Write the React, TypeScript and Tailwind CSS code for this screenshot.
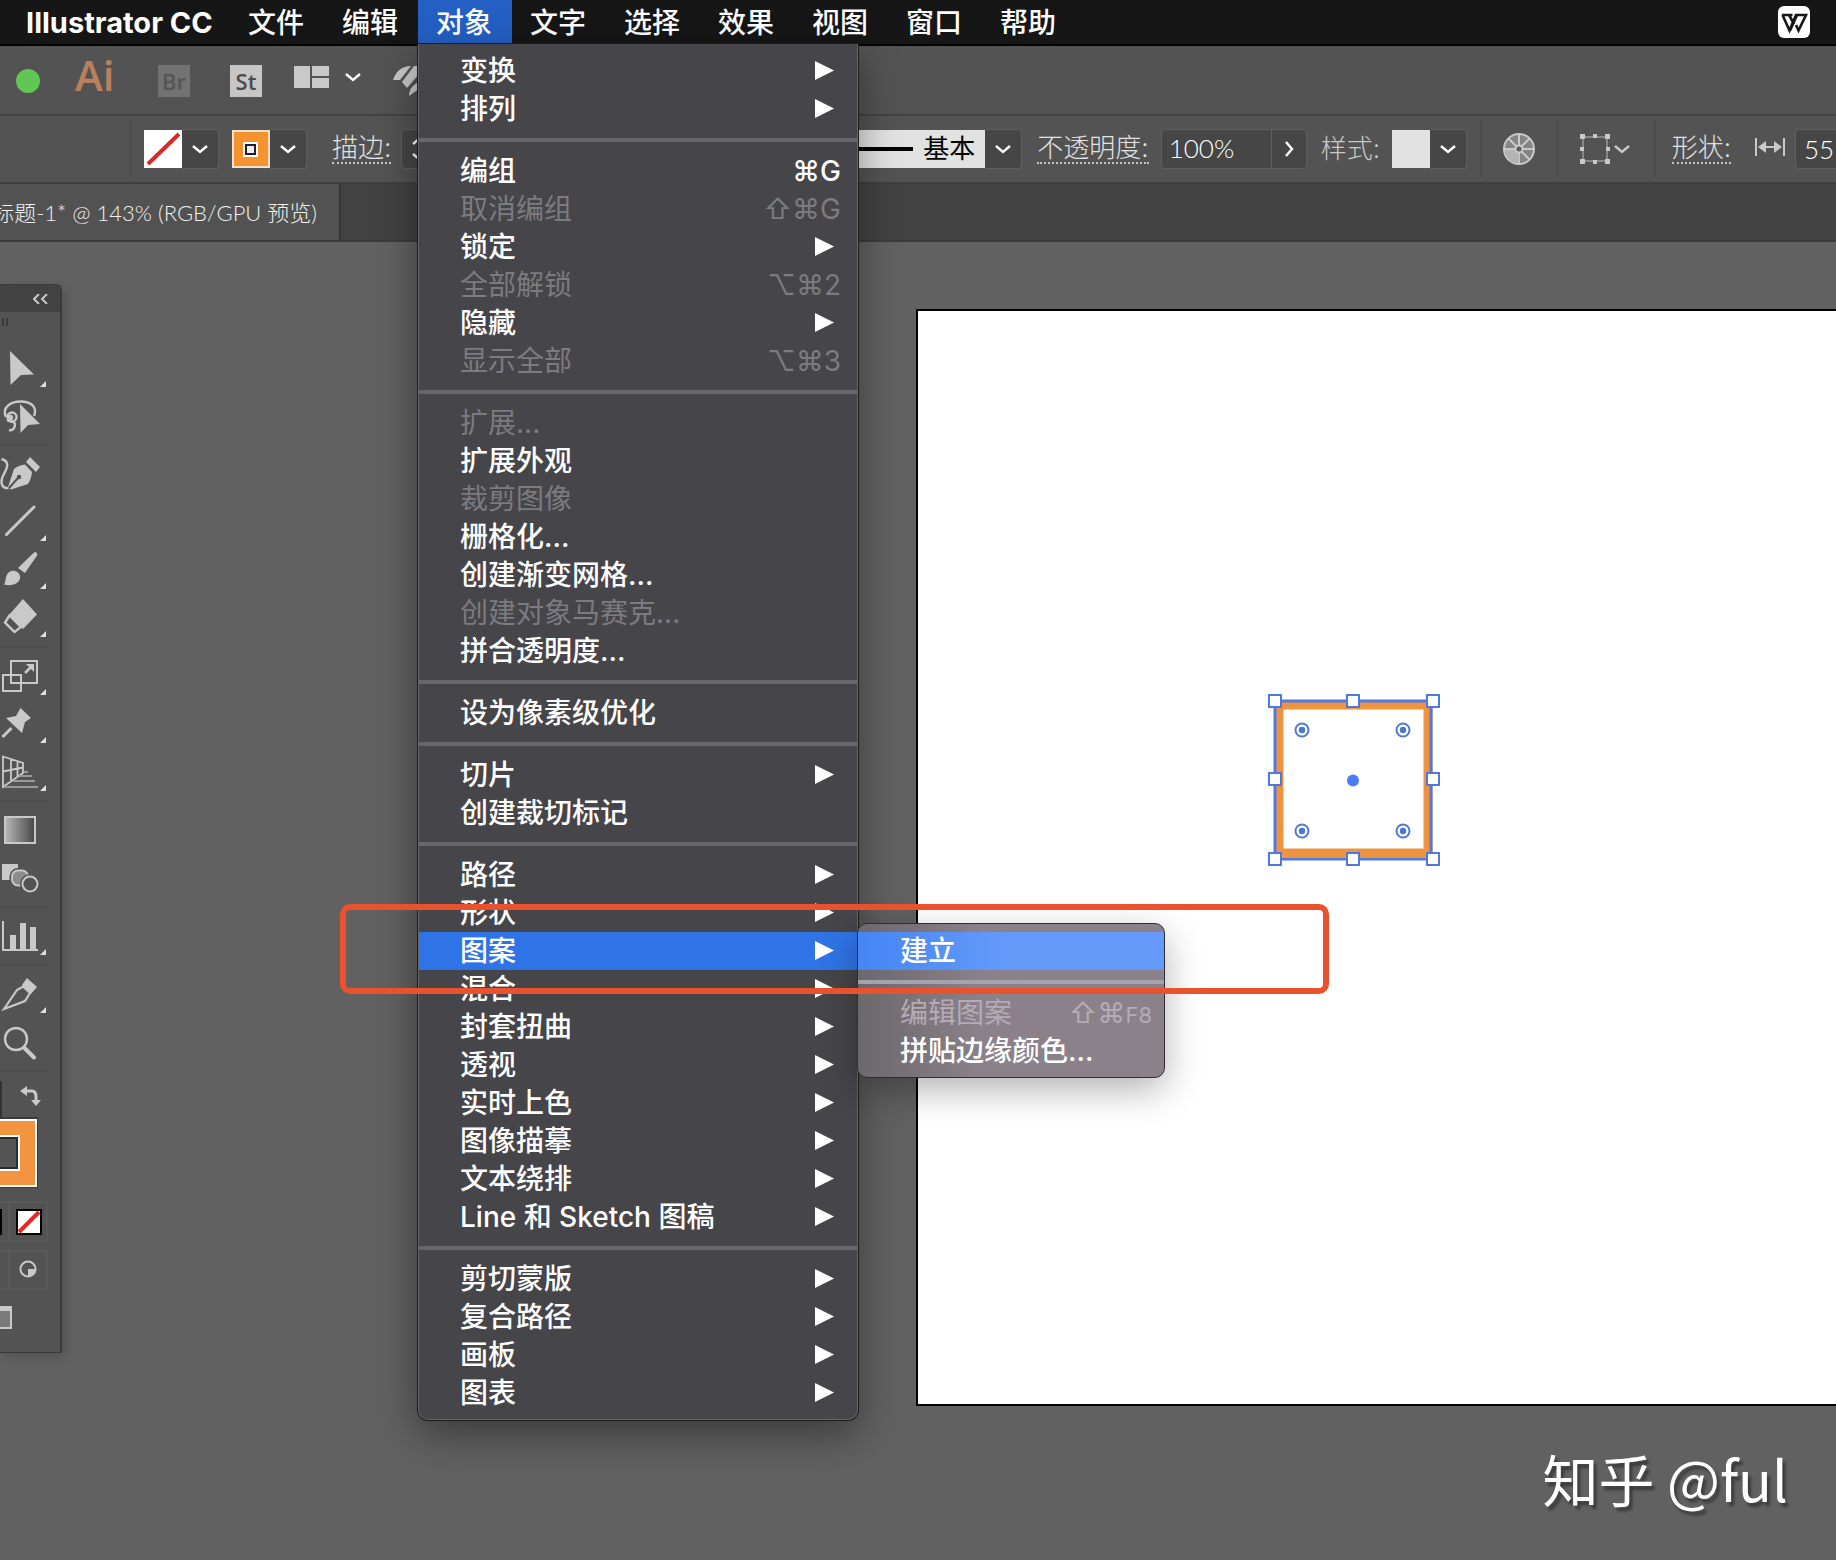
import { Fragment, type ReactNode } from 'react'
import clsx from 'clsx'

type Entry = {
  label: string
  keys?: string
  sub?: boolean
  disabled?: boolean
}

const MENUS = ['文件', '编辑', '对象', '文字', '选择', '效果', '视图', '窗口', '帮助']

const OBJECT_MENU: Entry[][] = [
  [
    { label: '变换', sub: true },
    { label: '排列', sub: true },
  ],
  [
    { label: '编组', keys: '⌘G' },
    { label: '取消编组', keys: '⇧⌘G', disabled: true },
    { label: '锁定', sub: true },
    { label: '全部解锁', keys: '⌥⌘2', disabled: true },
    { label: '隐藏', sub: true },
    { label: '显示全部', keys: '⌥⌘3', disabled: true },
  ],
  [
    { label: '扩展...', disabled: true },
    { label: '扩展外观' },
    { label: '裁剪图像', disabled: true },
    { label: '栅格化...' },
    { label: '创建渐变网格...' },
    { label: '创建对象马赛克...', disabled: true },
    { label: '拼合透明度...' },
  ],
  [{ label: '设为像素级优化' }],
  [{ label: '切片', sub: true }, { label: '创建裁切标记' }],
  [
    { label: '路径', sub: true },
    { label: '形状', sub: true },
    { label: '图案', sub: true },
    { label: '混合', sub: true },
    { label: '封套扭曲', sub: true },
    { label: '透视', sub: true },
    { label: '实时上色', sub: true },
    { label: '图像描摹', sub: true },
    { label: '文本绕排', sub: true },
    { label: 'Line 和 Sketch 图稿', sub: true },
  ],
  [
    { label: '剪切蒙版', sub: true },
    { label: '复合路径', sub: true },
    { label: '画板', sub: true },
    { label: '图表', sub: true },
  ],
]

const ICON = '#c9c9c9'

function PatternSubmenu() {
  return (
    <div className="absolute -top-[9px] left-full z-10 w-[308px] rounded-[10px] border border-[#2f2f2f] bg-linear-to-r from-[#6c686c] to-[#8a818a] to-40% pt-2 pb-[7px] shadow-[0_12px_36px_rgba(0,0,0,0.3)]">
      <button
        type="button"
        className="flex h-[38px] w-full items-center bg-linear-to-r from-[#4486f4] to-[#659afa] to-50% pl-[42px] text-white"
      >
        建立
      </button>
      <hr className="my-2.5 h-1 border-0 bg-[#a3a3ab]" />
      <button
        type="button"
        disabled
        className="flex h-[38px] w-full items-center justify-between pr-3 pl-[42px] font-normal text-[#b5abb6]"
      >
        编辑图案
        <span className="flex items-baseline">
          ⇧⌘<span className="text-[22px]">F8</span>
        </span>
      </button>
      <button type="button" className="flex h-[38px] w-full items-center pl-[42px] text-white">
        拼贴边缘颜色...
      </button>
    </div>
  )
}

function MenuRow({ entry }: { entry: Entry }) {
  const active = entry.label === '图案'
  return (
    <div className="relative">
      <button
        type="button"
        disabled={entry.disabled}
        className={clsx(
          'flex h-[38px] w-full items-center justify-between pl-[41px]',
          active && 'bg-[#2f74e6]',
          entry.disabled ? 'font-normal text-[#7c7b80]' : 'text-white',
          entry.sub ? 'pr-[23px]' : 'pr-4',
        )}
      >
        {entry.label}
        {entry.keys && <span>{entry.keys}</span>}
        {entry.sub && (
          <svg width="19" height="20" viewBox="0 0 19 20" fill="#fff">
            <path d="M0 0 19 9.500 0 19z" />
          </svg>
        )}
      </button>
      {active && <PatternSubmenu />}
    </div>
  )
}

function ObjectMenu() {
  return (
    <div className="absolute top-full left-0 z-20 w-[440px] rounded-b-[10px] border border-t-0 border-[#67676b] bg-[#464549] pt-2 pb-[7px] shadow-[0_0_0_1px_#1c1c1c,0_14px_40px_rgba(0,0,0,0.4)]">
      {OBJECT_MENU.map((group, i) => (
        <Fragment key={i}>
          {i > 0 && <hr className="my-2.5 h-1 border-0 bg-[#68676c]" />}
          {group.map((entry) => (
            <MenuRow key={entry.label} entry={entry} />
          ))}
        </Fragment>
      ))}
    </div>
  )
}

function MenuBar() {
  return (
    <header className="flex h-[46px] border-b-2 border-black bg-[#161616] text-[28px] leading-none font-medium text-white">
      <button type="button" className="w-[230px] shrink-0 pl-[26px] text-left text-[29px] font-bold whitespace-nowrap">
        Illustrator CC
      </button>
      {MENUS.map((name) => (
        <div key={name} className="relative h-11 w-[94px] shrink-0">
          <button type="button" className={clsx('h-11 w-full pt-0.5 pr-0.5', name === '对象' && 'bg-[#245fc4]')}>
            {name}
          </button>
          {name === '对象' && <ObjectMenu />}
        </div>
      ))}
      <button type="button" aria-label="WPS" className="mr-[26px] ml-auto">
        <svg width="32" height="32" viewBox="0 0 32 32">
          <rect width="32" height="32" rx="6" fill="#fff" />
          <path
            d="M4 9h10.500l-3.500 0 5 9M4.500 9l7 15.500L18 9h10l-7.500 15.500-2.500-5.500"
            fill="none"
            stroke="#161616"
            strokeWidth="2.600"
          />
          <path d="M12 24.500 19 9" stroke="#161616" strokeWidth="2.600" />
        </svg>
      </button>
    </header>
  )
}

function Chevron({ right, color = '#fff' }: { right?: boolean; color?: string }) {
  return (
    <svg width="16" height="16" viewBox="0 0 16 16" fill="none" stroke={color} strokeWidth="2.400">
      <path d={right ? 'M5 1l6 7-6 7' : 'M1 5l7 6 7-6'} />
    </svg>
  )
}

function AppBar() {
  return (
    <div className="flex h-[70px] items-center border-b-2 border-[#424242] bg-[#535353] pt-0.5">
      <button type="button" aria-label="缩放窗口" className="ml-4 size-6 rounded-full bg-[#61c654]" />
      <span className="-mt-3 ml-[35px] w-[41px] font-['Open_Sans'] text-[42px] leading-none font-semibold text-[#b9805f]">
        Ai
      </span>
      <button
        type="button"
        className="ml-[42px] size-8 bg-[#727272] font-['Open_Sans'] text-[22px] leading-8 font-semibold text-[#555]"
      >
        Br
      </button>
      <button
        type="button"
        className="ml-10 size-8 bg-[#c6c6c6] font-['Open_Sans'] text-[22px] leading-8 font-semibold text-[#4c4c4c]"
      >
        St
      </button>
      <button type="button" aria-label="排列文档" className="-mt-2 ml-8 flex items-center gap-4">
        <svg width="35" height="22" viewBox="0 0 35 22" fill={ICON}>
          <path d="M0 0h16v22H0zM18 0h17v10H18zM18 12h17v10H18z" />
        </svg>
        <Chevron />
      </button>
      <svg className="ml-8 shrink-0" width="34" height="34" viewBox="0 0 34 34" fill={ICON}>
        <path d="M0 16C3 7 9 2 18 2L7 16zM9 18 21 2h12L14 24zM16 32c0-4 1-7 4-10l10-8v8z" />
      </svg>
    </div>
  )
}

function DropButton({ label }: { label: string }) {
  return (
    <button
      type="button"
      aria-label={label}
      className="flex h-10 w-[37px] shrink-0 items-center justify-center rounded-r-sm border border-l-0 border-[#606060] bg-[#464646]"
    >
      <Chevron />
    </button>
  )
}

function Divider() {
  return <div className="h-[56px] w-0.5 shrink-0 bg-[#4c4c4c]" />
}

const LABEL =
  'shrink-0 border-b-2 border-dotted border-[#c8c8c8] text-[26px] leading-7 font-light whitespace-nowrap text-[#e2e2e2]'

function ControlBar() {
  return (
    <div className="flex h-[68px] items-center overflow-hidden border-b-2 border-[#3f3f3f] bg-[#535353]">
      <div className="ml-[130px]" />
      <Divider />
      <button type="button" aria-label="填色" className="ml-3 shrink-0">
        <svg className="block" width="38" height="38" viewBox="0 0 38 38">
          <path fill="#fff" d="M0 0h38v38H0z" />
          <path d="M4 34 35 4" stroke="#d92b26" strokeWidth="4" />
        </svg>
      </button>
      <DropButton label="填色选项" />
      <button type="button" aria-label="描边颜色" className="ml-[13px] shrink-0">
        <svg className="block" width="38" height="38" viewBox="0 0 38 38">
          <path fill="#f3e2cd" d="M0 0h38v38H0z" />
          <path fill="#f69331" d="M2 2h34v34H2z" />
          <path fill="#fff" d="M11 12h15v15H11z" />
          <path fill="#f0f0f0" stroke="#1d2233" strokeWidth="2" d="M14 15h9v9h-9z" />
        </svg>
      </button>
      <DropButton label="描边颜色选项" />
      <label htmlFor="weight" className={clsx(LABEL, 'ml-[25px]')}>
        描边:
      </label>
      <div className="ml-2.5 flex h-10 w-[140px] shrink-0 items-center rounded-sm border border-[#606060] bg-[#464646]">
        <svg className="ml-2.5 shrink-0" width="16" height="26" viewBox="0 0 16 26" fill="none" stroke="#fff" strokeWidth="2.400">
          <path d="M1 8l7-6 7 6M1 18l7 6 7-6" />
        </svg>
        <input id="weight" className="w-16 bg-transparent text-white" />
      </div>
      <button
        type="button"
        className="ml-[242px] flex h-[38px] w-[202px] shrink-0 items-center justify-end gap-2.5 bg-[#e2e2e2] pr-2.5 text-[26px] leading-none text-black"
      >
        <span className="h-1 flex-1 bg-black" />
        基本
      </button>
      <DropButton label="画笔选项" />
      <label htmlFor="opacity" className={clsx(LABEL, 'ml-[15px]')}>
        不透明度:
      </label>
      <div className="ml-3 flex h-10 w-[146px] shrink-0 rounded-sm border border-[#606060] bg-[#464646]">
        <input
          id="opacity"
          defaultValue="100%"
          className="w-[110px] border-r border-[#606060] pb-0.5 pl-[7px] font-['Lato'] text-[26px] font-light text-white"
        />
        <button type="button" aria-label="不透明度滑块" className="flex flex-1 items-center justify-center">
          <Chevron right />
        </button>
      </div>
      <span className="ml-3.5 w-[71px] shrink-0 text-[26px] leading-7 font-light whitespace-nowrap text-[#c9c9c9]">
        样式:
      </span>
      <button type="button" aria-label="图形样式" className="size-[38px] shrink-0 bg-[#e2e2e2]" />
      <DropButton label="图形样式选项" />
      <div className="ml-[13px]" />
      <Divider />
      <button type="button" aria-label="重新着色图稿" className="ml-5 shrink-0">
        <svg width="34" height="34" viewBox="0 0 34 34" fill="none" stroke={ICON}>
          <circle cx="17" cy="17" r="15" fill="#858585" strokeWidth="2" />
          <path d="M17 2v12M17 20v12M2 17h12M20 17h12M6 6l9 9M28 6l-9 9M6 28l9-9M28 28l-9-9" strokeWidth="2" />
          <path d="M3 18a14 14 0 0 0 14 13v-9l-4-4z" fill="#b4b4b4" stroke="none" />
          <circle cx="17" cy="17" r="3.500" fill="#5c5c5c" strokeWidth="2" />
        </svg>
      </button>
      <div className="ml-5" />
      <Divider />
      <button type="button" aria-label="对齐" className="ml-[22px] flex shrink-0 items-center gap-1">
        <svg width="30" height="30" viewBox="0 0 30 30" fill={ICON}>
          <path d="M3 3h24v24H3z" fill="none" stroke="#9a9a9a" strokeWidth="1.500" />
          <path d="M0 0h5v5H0zM13 0h4v4h-4zM25 0h5v5h-5zM0 13h4v4H0zM26 13h4v4h-4zM0 25h5v5H0zM13 26h4v4h-4zM25 25h5v5h-5z" />
        </svg>
        <Chevron color={ICON} />
      </button>
      <div className="ml-6" />
      <Divider />
      <label htmlFor="shape-width" className={clsx(LABEL, 'ml-4')}>
        形状:
      </label>
      <svg className="-mt-1 ml-6 shrink-0" width="30" height="18" viewBox="0 0 30 18" fill="none" stroke={ICON} strokeWidth="2">
        <path d="M1 0v18M29 0v18M6 9h18" />
        <path d="M3 9l8-6v12zM27 9l-8-6v12z" fill={ICON} stroke="none" />
      </svg>
      <input
        id="shape-width"
        defaultValue="55"
        className="ml-2.5 h-10 min-w-0 flex-1 rounded-l-sm border border-r-0 border-[#606060] bg-[#464646] pl-2 font-['Lato'] text-[26px] font-light text-white"
      />
    </div>
  )
}

function TabBar() {
  return (
    <div className="flex h-[58px] border-b-2 border-[#3c3c3c] bg-[#424242]">
      <button
        type="button"
        className="flex w-[341px] shrink-0 items-center justify-end overflow-hidden border-r-2 border-[#363636] bg-[#525252] pr-[22px] font-['Lato','Noto_Sans_CJK_SC',sans-serif] text-[22px] font-light whitespace-nowrap text-[#f0f0f0]"
      >
        标题-1* @ 143% (RGB/GPU 预览)
      </button>
    </div>
  )
}

type Tool = { name: string; more?: boolean; art: ReactNode }

const TOOL_GROUPS: Tool[][] = [
  [
    { name: '选择工具', more: true, art: <path d="M10 7 34 30.500 21 31 10.500 41z" /> },
    {
      name: '套索工具',
      art: (
        <>
          <path d="M20 12 40 32 28 33 20.500 41z" />
          <g fill="none" stroke={ICON} strokeWidth="2.400">
            <path d="M6 25C1 14 13 9 22 9.500c11 .5 15 7 12 14.500" />
            <circle cx="12" cy="25" r="4.500" />
            <circle cx="10.500" cy="25.500" r="1.500" />
            <path d="M7 28c3 3 7 0 8 4 0 4-2 7-6 6" />
          </g>
        </>
      ),
    },
  ],
  [
    {
      name: '曲率工具',
      art: (
        <>
          <path d="M8 37 14 19c4-3 7-4 11-4.500l7 7.500c-.5 5-2 9-4 12L11 39.500z" />
          <path d="m30 7 10 10-4 5-10-10z" />
          <path d="m8.500 38.500 10-11" stroke="#535353" strokeWidth="2" />
          <circle cx="19" cy="27" r="2.200" fill="#535353" />
          <path d="M1.500 9c7 2 7 7 3 14-6 10-2 16 4 15" fill="none" stroke={ICON} strokeWidth="2.400" />
        </>
      ),
    },
    { name: '直线段工具', more: true, art: <path d="M6.500 36.500 34 9" stroke={ICON} strokeWidth="3" strokeLinecap="round" /> },
    {
      name: '画笔工具',
      more: true,
      art: (
        <>
          <path d="M34 6.500c2-1 4 0 3 3L25 27l-7-5z" />
          <path d="M4 38.500c2-3 1-6 3-10 2-4 7-5 11-2 4 4 2 9-2 11-4 2-8 2-12 1z" />
        </>
      ),
    },
    {
      name: '橡皮擦工具',
      more: true,
      art: (
        <>
          <path d="m23 5 14 15.500L23 35 9 21z" />
          <path d="m9.500 21.500-4.500 7L14.500 38l6.500-5z" fill="#535353" stroke={ICON} strokeWidth="2.400" />
        </>
      ),
    },
  ],
  [
    {
      name: '比例缩放工具',
      more: true,
      art: (
        <>
          <path d="M11 9h26v22H11zM3 23h18v16H3z" fill="none" stroke={ICON} strokeWidth="2" />
          <path d="m25 21 6-6" stroke={ICON} strokeWidth="2.500" />
          <path d="M26 12h8v8z" />
        </>
      ),
    },
    {
      name: '操控变形工具',
      more: true,
      art: (
        <>
          <path d="m2.500 37 9-9" stroke={ICON} strokeWidth="3" />
          <path d="M20.500 8 31 18l-6 4-3 11L6 18l10-2z" />
        </>
      ),
    },
    {
      name: '透视网格工具',
      more: true,
      art: (
        <g fill="none" stroke={ICON} strokeWidth="1.800">
          <path d="m3 8.500 20 6.500v10L3 39zM11 11.500v21M17.500 13.500v15M3 23.500l20-4" />
          <path d="M24 24h4M19 28h13M13 33h22M4 39h34" stroke="#999" />
        </g>
      ),
    },
  ],
  [
    {
      name: '渐变工具',
      art: (
        <>
          <defs>
            <linearGradient id="ramp">
              <stop offset="0" stopColor="#b8b8b8" />
              <stop offset="1" stopColor="#454545" />
            </linearGradient>
          </defs>
          <path d="M5 11h30v26H5z" fill="url(#ramp)" stroke={ICON} strokeWidth="2" />
        </>
      ),
    },
    {
      name: '混合工具',
      art: (
        <>
          <path d="M2 10h16v16H2z" />
          <rect x="12" y="16.500" width="16" height="15" rx="6" fill="#8c8c8c" stroke="#535353" strokeWidth="5" />
          <rect x="12" y="16.500" width="16" height="15" rx="6" fill="#8c8c8c" stroke={ICON} strokeWidth="1.800" />
          <circle cx="30" cy="30" r="7.500" fill="#535353" stroke="#535353" strokeWidth="5" />
          <circle cx="30" cy="30" r="7.500" fill="none" stroke={ICON} strokeWidth="2" />
        </>
      ),
    },
  ],
  [{ name: '柱形图工具', more: true, art: <path d="M2 9h2v28h6V23h6v14h4V11h6v26h4V15h6v22h2v2H2z" /> }],
  [
    {
      name: '切片工具',
      more: true,
      art: (
        <>
          <path d="m27 8 10 9-6 7-9-9z" />
          <path d="M4 39 17 20l6-3.500L30 23l-5 8z" fill="none" stroke={ICON} strokeWidth="2.200" />
        </>
      ),
    },
    {
      name: '缩放工具',
      art: (
        <g fill="none" stroke={ICON}>
          <circle cx="16" cy="21" r="11" strokeWidth="2.400" />
          <path d="m24.500 30 9.500 9.500" strokeWidth="4" strokeLinecap="round" />
        </g>
      ),
    },
  ],
]

function ToolPanel() {
  return (
    <aside className="absolute top-[42px] left-0 w-[62px] overflow-hidden rounded-tr-md border-t border-r-2 border-b border-[#3a3a3a] bg-[#535353] pb-4 shadow-[4px_4px_10px_rgba(0,0,0,0.14)]">
      <div className="flex h-[27px] items-center justify-end bg-[#424242] pr-3">
        <button type="button" aria-label="折叠面板">
          <svg width="15" height="10" viewBox="0 0 15 10" fill="none" stroke={ICON} strokeWidth="2">
            <path d="M6 0 1 5l5 5M14 0 9 5l5 5" />
          </svg>
        </button>
      </div>
      <div className="mt-1.5 flex h-2 gap-0.5 pl-0.5">
        <span className="w-0.5 bg-[#3a3a3a]" />
        <span className="w-0.5 bg-[#3a3a3a]" />
      </div>
      <div className="mt-[18px] flex flex-col">
        {TOOL_GROUPS.map((tools, i) => (
          <div key={i} className="flex flex-col">
            {i > 0 && <div className="my-1 mr-3 h-0.5 bg-[#4e4e4e]" />}
            {tools.map((tool) => (
              <button type="button" key={tool.name} aria-label={tool.name} className="h-12 w-12">
                <svg className="block" width="48" height="48" viewBox="0 0 48 48" fill={ICON}>
                  {tool.art}
                  {tool.more && <path d="M46 37v6h-6z" fill="#e0e0e0" />}
                </svg>
              </button>
            ))}
          </div>
        ))}
      </div>
      <div className="mt-1 mr-3 h-0.5 bg-[#4e4e4e]" />
      {/* fill / stroke proxies, only their right halves stick out */}
      <svg className="block" width="48" height="264" viewBox="0 0 48 264" fill="none">
        <path d="M0 9h2v38H0z" fill="#333" />
        <path d="M24 19h8q4 0 4 6v4" stroke={ICON} strokeWidth="3" />
        <path d="m20 19 7-5v10zM31 28h10l-5 6z" fill={ICON} />
        <path d="M0 45h38v71H0z" fill="#3b3b3b" />
        <path d="M0 47h37v68H0z" fill="#fff" />
        <path d="M0 49h35v64H0z" fill="#f29440" />
        <path d="M0 63h20v36H0z" fill="#fff" />
        <path d="M0 65h18v32H0z" fill="#23302f" />
        <path d="M0 67h16v28H0z" fill="#555" />
        <path d="M0 130h47v39H0M9 130v39M0 179h47v38H0M9 179v38" stroke="#606060" />
        <path d="M0 137h2v26H0zM16 137h26v26H16z" fill="#000" />
        <path d="M18 139h22v22H18z" fill="#fff" />
        <path d="m19 160 20-20" stroke="#de2c26" strokeWidth="4" />
        <circle cx="28" cy="197" r="7.500" stroke={ICON} strokeWidth="2" />
        <path d="M28 197h7a7 7 0 0 1-7 7z" fill={ICON} />
        <path d="M0 234h12v23H0z" fill={ICON} />
        <path d="M0 239h10v16H0z" fill="#7a7a7a" />
      </svg>
    </aside>
  )
}

const HANDLES = [
  [7, 7], [85, 7], [165, 7],
  [7, 85], [165, 85],
  [7, 165], [85, 165], [165, 165],
]

const CORNERS = [
  [34, 36], [135, 36], [34, 137], [135, 137],
]

function SelectedSquare() {
  return (
    <svg
      className="absolute top-[383px] left-[350px]"
      width="172"
      height="172"
      viewBox="0 0 172 172"
      fill="#fff"
    >
      <path d="M11 11h149v148H11z" stroke="#ee9440" strokeWidth="9" />
      <path d="M7 7h156v158H7z" fill="none" stroke="#5079e4" strokeWidth="3" />
      {HANDLES.map(([x, y]) => (
        <rect key={`${x}-${y}`} x={x - 6} y={y - 6} width="12" height="12" stroke="#4f78d8" strokeWidth="2" />
      ))}
      {CORNERS.map(([x, y]) => (
        <g key={`${x}-${y}`}>
          <circle cx={x} cy={y} r="6.500" stroke="#5079cf" strokeWidth="2" />
          <circle cx={x} cy={y} r="3.200" fill="#4778d6" />
        </g>
      ))}
      <circle cx="85" cy="86.500" r="6" fill="#4a7cf8" />
    </svg>
  )
}

function App() {
  return (
    <div className="relative flex min-h-screen flex-col overflow-hidden bg-[#616161] font-['Inter','Noto_Sans_CJK_SC',sans-serif]">
      <MenuBar />
      <AppBar />
      <ControlBar />
      <TabBar />
      <main className="relative flex-1">
        <div className="absolute top-[67px] right-0 left-[916px] h-[1097px] border-2 border-r-0 border-black bg-white">
          <SelectedSquare />
        </div>
        <ToolPanel />
        <p className="absolute right-12 bottom-12 font-['Noto_Sans_CJK_SC',sans-serif] text-[56px] leading-[68px] whitespace-nowrap text-white [text-shadow:3px_4px_3px_rgba(0,0,0,0.4)]">
          知乎 @ful
        </p>
      </main>
      <div className="pointer-events-none absolute top-[904px] left-[340px] z-30 h-[90px] w-[989px] rounded-[10px] border-[6px] border-[#ea522d]" />
    </div>
  )
}

export default App
